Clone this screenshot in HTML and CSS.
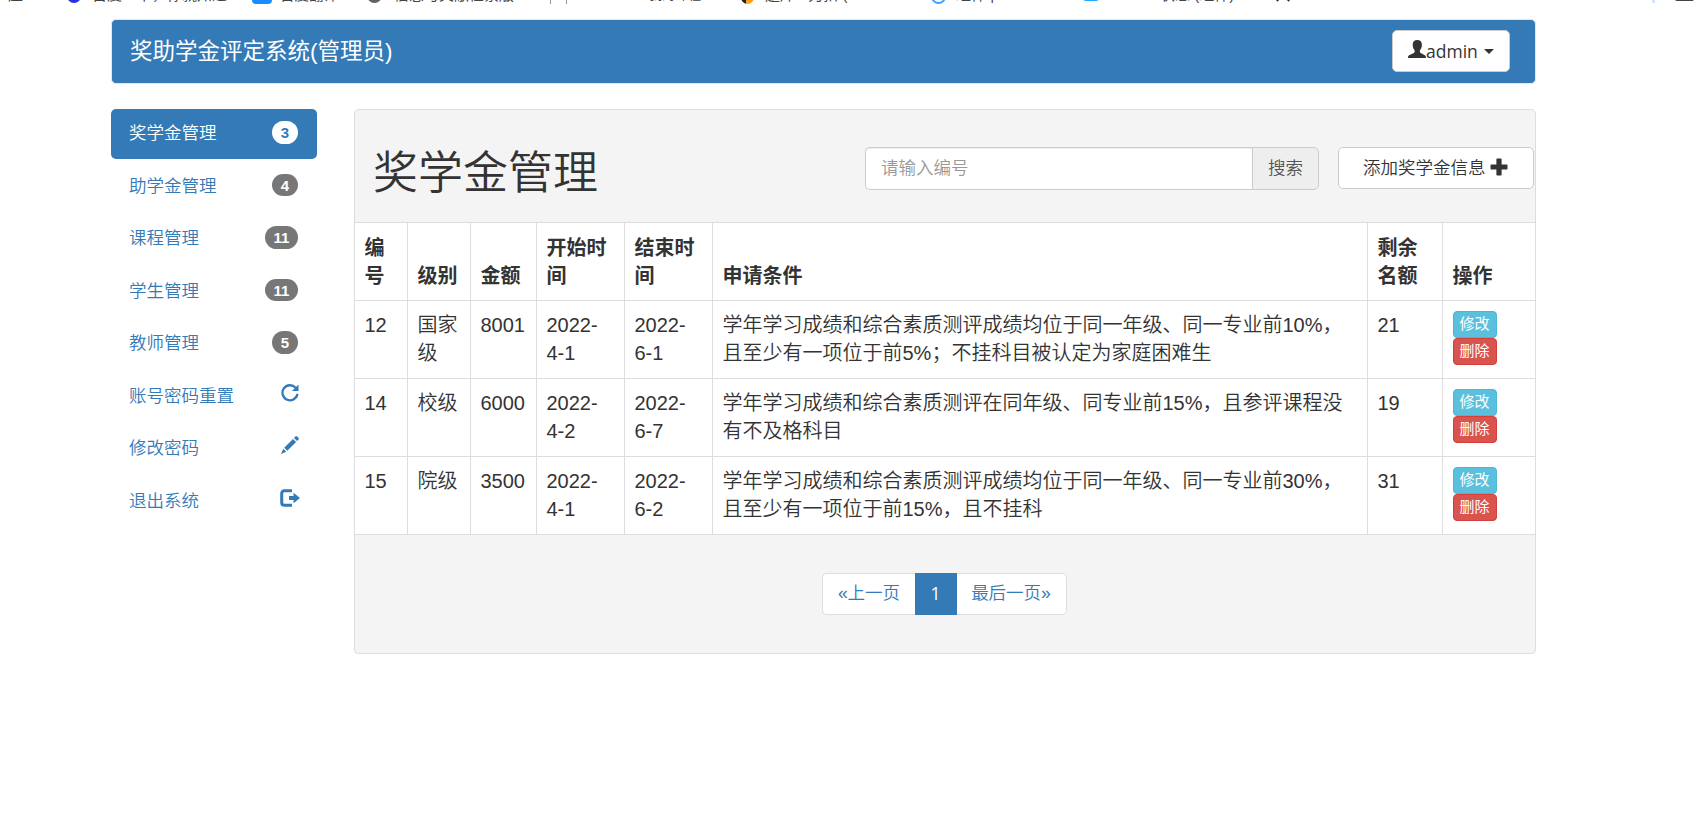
FILE: index.html
```html
<!DOCTYPE html>
<html lang="zh-CN">
<head>
    <meta charset="UTF-8">
    <meta name="viewport" content="width=device-width, initial-scale=1.0">
    <title>奖助学金评定系统</title>
    <link rel="stylesheet" href="styles.css">
</head>
<body>
    <div class="bookmarks">
        <span class="bm bm-first">应</span>
        <i class="dot dot-paw"></i><span class="bm bm-baidu">百度一下，你就知道</span>
        <i class="dot dot-blue"></i><span class="bm bm-fanyi">百度翻译</span>
        <i class="dot dot-gray"></i><span class="bm bm-info">信息与文献检索版</span>
        <i class="dot dot-line"></i><span class="bm bm-course">我的课程</span>
        <i class="dot dot-leet"></i><span class="bm bm-leet">题库 - 力扣 (</span>
        <i class="dot dot-hex"></i><span class="bm bm-comp">组件 |</span>
        <i class="dot dot-sky"></i><span class="bm bm-state">状态 (组件)</span>
        <i class="dot dot-git"></i>
        <i class="dot dot-sep"></i>
        <i class="dot dot-folder"></i>
    </div>

    <div class="container">
        <nav class="navbar">
            <a class="navbar-brand">奖助学金评定系统(管理员)</a>
            <button class="btn btn-user">
                <svg class="icon" viewBox="0 0 18 18"><path d="M9.300 0C6.300 0 4.700 1.800 4.700 4.800c0 2.600.8 4.400 1.900 5.500v1.500c0 .6-.3.900-.8 1.200L1.600 15C.4 15.600 0 16.300 0 18h18c0-1.700-.4-2.400-1.600-3l-3.700-2c-.5-.3-.8-.6-.8-1.200v-1.500c1.200-1.100 2-2.900 2-5.500C13.900 1.800 12.300 0 9.300 0z"/></svg>admin
                <span class="caret"></span>
            </button>
        </nav>

        <div class="row">
            <ul class="sidebar">
                <li class="active"><a>奖学金管理<span class="badge">3</span></a></li>
                <li><a>助学金管理<span class="badge">4</span></a></li>
                <li><a>课程管理<span class="badge">11</span></a></li>
                <li><a>学生管理<span class="badge">11</span></a></li>
                <li><a>教师管理<span class="badge">5</span></a></li>
                <li><a>账号密码重置
                    <svg class="icon" viewBox="0 0 18 18"><path d="M14.600 3.800A7.500 7.500 0 1 0 16.400 9.800" fill="none" stroke="currentColor" stroke-width="2.300"/><path d="M17.500.5V7H11z"/></svg></a></li>
                <li><a>修改密码
                    <svg class="icon" viewBox="0 0 18 18"><path d="M14.300.6c.6-.6 1.300-.6 1.900 0l1.200 1.200c.6.6.6 1.300 0 1.900l-1.300 1.300-3.100-3.100zM12 2.900 15.100 6 6.300 14.800 3.200 11.700zM2.300 12.700l3 3L0 18z"/></svg></a></li>
                <li><a>退出系统
                    <svg class="icon icon-out" viewBox="0 0 20 18"><path d="M12 1.800H4.500Q1.700 1.800 1.700 4.600v8.800q0 2.800 2.800 2.800H12" fill="none" stroke="currentColor" stroke-width="3"/><path d="M13.500 3.800 20 9 13.500 14.200v-3.300H9V7.100h4.500z"/></svg></a></li>
            </ul>

            <div class="panel">
                <div class="panel-heading">
                    <h1>奖学金管理</h1>
                    <div class="input-group">
                        <input type="text" class="form-control" placeholder="请输入编号">
                        <span class="input-addon">搜索</span>
                    </div>
                    <button class="btn btn-add">添加奖学金信息
                        <svg class="icon" viewBox="0 0 18 18"><path d="M7.200.5h3.600q.8 0 .8.800v5.100h5.100q.8 0 .8.800v3.600q0 .8-.8.800h-5.100v5.100q0 .8-.8.800H7.200q-.8 0-.8-.8v-5.100H1.300q-.8 0-.8-.8V7.200q0-.8.8-.8h5.100V1.300q0-.8.800-.8z"/></svg>
                    </button>
                </div>

                <table class="table">
                    <colgroup>
                        <col class="col-id"><col class="col-level"><col class="col-money">
                        <col class="col-date"><col class="col-date"><col class="col-cond">
                        <col class="col-left"><col class="col-op">
                    </colgroup>
                    <thead>
                        <tr>
                            <th>编号</th>
                            <th>级别</th>
                            <th>金额</th>
                            <th>开始时间</th>
                            <th>结束时间</th>
                            <th>申请条件</th>
                            <th>剩余名额</th>
                            <th>操作</th>
                        </tr>
                    </thead>
                    <tbody>
                        <tr>
                            <td>12</td>
                            <td>国家级</td>
                            <td>8001</td>
                            <td>2022-<br>4-1</td>
                            <td>2022-<br>6-1</td>
                            <td>学年学习成绩和综合素质测评成绩均位于同一年级、同一专业前10%，<br>且至少有一项位于前5%；不挂科目被认定为家庭困难生</td>
                            <td>21</td>
                            <td class="ops"><a class="btn-xs btn-info">修改</a><a class="btn-xs btn-danger">删除</a></td>
                        </tr>
                        <tr>
                            <td>14</td>
                            <td>校级</td>
                            <td>6000</td>
                            <td>2022-<br>4-2</td>
                            <td>2022-<br>6-7</td>
                            <td>学年学习成绩和综合素质测评在同年级、同专业前15%，且参评课程没<br>有不及格科目</td>
                            <td>19</td>
                            <td class="ops"><a class="btn-xs btn-info">修改</a><a class="btn-xs btn-danger">删除</a></td>
                        </tr>
                        <tr>
                            <td>15</td>
                            <td>院级</td>
                            <td>3500</td>
                            <td>2022-<br>4-1</td>
                            <td>2022-<br>6-2</td>
                            <td>学年学习成绩和综合素质测评成绩均位于同一年级、同一专业前30%，<br>且至少有一项位于前15%，且不挂科</td>
                            <td>31</td>
                            <td class="ops"><a class="btn-xs btn-info">修改</a><a class="btn-xs btn-danger">删除</a></td>
                        </tr>
                    </tbody>
                </table>

                <div class="panel-footer">
                    <ul class="pagination">
                        <li class="prev">«上一页</li>
                        <li class="active">1</li>
                        <li class="next">最后一页»</li>
                    </ul>
                </div>
            </div>
        </div>
    </div>
</body>
</html>
```
FILE: styles.css
```css
* {
    box-sizing: border-box;
}

body {
    margin: 0;
    background: #fff;
    color: #333;
    font-family: "Liberation Sans", "Noto Sans CJK SC", sans-serif;
    font-size: 17.5px;
    font-weight: 350;
    line-height: 25px;
}

ul {
    list-style: none;
    margin: 0;
    padding: 0;
}

.icon {
    width: 18px;
    height: 18px;
    fill: currentColor;
}

/* bottom edge of the bookmarks bar */
.bookmarks {
    display: flex;
    align-items: flex-end;
    height: 4px;
    overflow: hidden;
    font-size: 15px;
    line-height: 20px;
    font-weight: 400;
    color: #444;
}

.bm {
    flex: none;
    height: 20px;
    margin-bottom: -1px;
    white-space: nowrap;
}

.bm-first { width: 18px; margin-left: 8px; }
.bm-baidu { width: 136px; margin-left: 11px; }
.bm-fanyi { width: 60px; margin-left: 8px; font-size: 14.5px; }
.bm-info { width: 120px; margin-left: 12px; }
.bm-course { width: 60px; margin-left: 82px; font-size: 13px; }
.bm-leet { width: 90px; margin-left: 11px; }
.bm-comp { width: 42px; margin-left: 10px; }
.bm-state { width: 80px; margin-left: 61px; }

.dot {
    flex: none;
    height: 18px;
    width: 16px;
    border-radius: 8px;
}

.dot-paw { width: 14px; margin-left: 41px; margin-bottom: 1px; background: #2932e1; }
.dot-blue { width: 20px; margin-left: 24px; border-radius: 4px; background: #1a8cff; }
.dot-gray { width: 15px; margin-left: 27px; margin-bottom: 1px; border: 3px solid #5f6368; }
.dot-line { width: 17px; margin-left: 36px; border: solid #999; border-width: 0 1px; border-radius: 0; }
.dot-leet { width: 13px; margin-left: 32px; background: linear-gradient(90deg, #222 40%, #ffa116 40%); }
.dot-hex { width: 15px; margin-left: 76px; border: 2px solid #409eff; }
.dot-sky { width: 16px; margin-left: 85px; margin-bottom: 3px; border-radius: 3px; background: #1fa8ff; }
.dot-git { width: 16px; margin-left: 35px; border: 5px solid #24292f; border-bottom-color: #fff; }
.dot-sep { width: 3px; margin-left: 361px; margin-bottom: 1px; border-radius: 0; background: #d3e3fd; }
.dot-folder { width: 19px; margin-left: 20px; margin-bottom: 3px; border-radius: 2px; background: #444; }

.container {
    width: 1425px;
    margin: 15px 0 0 111px;
}

.navbar {
    display: flex;
    justify-content: space-between;
    align-items: flex-start;
    height: 65px;
    padding: 10px 25px 0 18px;
    border: 1px solid #e7e7e7;
    border-radius: 5px;
    background: #337ab7;
}

.navbar-brand {
    margin-top: 9px;
    color: #fff;
    font-size: 22.5px;
    font-weight: 400;
}

.btn {
    border: 1px solid #ccc;
    border-radius: 5px;
    background: #fff;
    color: #333;
    font-family: inherit;
    font-size: 17.5px;
    font-weight: inherit;
    line-height: 25px;
    white-space: nowrap;
}

.btn-user {
    display: flex;
    align-items: center;
    width: 118px;
    height: 42px;
    padding: 0 0 0 15px;
    font-family: "Open Sans", sans-serif;
    font-weight: 400;
}

.btn-user .icon {
    margin-top: -4px;
}

.caret {
    margin-left: 6px;
    border-top: 5px solid #333;
    border-left: 5px solid transparent;
    border-right: 5px solid transparent;
}

.row {
    display: flex;
    justify-content: space-between;
    margin-top: 25px;
}

.sidebar {
    display: flex;
    flex-direction: column;
    gap: 2.5px;
    width: 206px;
}

.sidebar a {
    display: flex;
    justify-content: space-between;
    align-items: flex-start;
    height: 50px;
    padding: 12px 19px 0 18px;
    border-radius: 5px;
    color: #337ab7;
}

.sidebar .active a {
    background: #337ab7;
    color: #fff;
}

.badge {
    height: 22.5px;
    min-width: 26px;
    padding: 0 8.75px;
    border-radius: 12.5px;
    background: #777;
    color: #fff;
    font-size: 15px;
    font-weight: 700;
    line-height: 23px;
    text-align: center;
}

.active .badge {
    background: #fff;
    color: #337ab7;
}

.sidebar .icon {
    margin-right: -1px;
}

.sidebar .icon-out {
    width: 20px;
    margin-right: -2px;
}

.panel {
    width: 1182px;
    height: 545px;
    border: 1px solid #ddd;
    border-radius: 5px;
    background: #f4f4f4;
    box-shadow: 0 1px 1px rgba(0, 0, 0, .05);
}

.panel-heading {
    display: flex;
    align-items: flex-start;
    height: 112px;
    padding: 37px 1px 0 18px;
}

h1 {
    width: 492px;
    margin: 2px 0 0;
    font-size: 45px;
    font-weight: 350;
    line-height: 50px;
}

.input-group {
    display: flex;
    width: 454px;
    height: 43px;
}

.form-control {
    flex: 1;
    min-width: 0;
    padding: 0 15px 1px;
    border: 1px solid #ccc;
    border-right: 0;
    border-radius: 5px 0 0 5px;
    background: #fff;
    box-shadow: inset 0 1px 1px rgba(0, 0, 0, .075);
    font: inherit;
}

.form-control::placeholder {
    color: #999;
}

.input-addon {
    width: 67px;
    padding-top: 8px;
    border: 1px solid #ccc;
    border-radius: 0 5px 5px 0;
    background: #eee;
    color: #555;
    text-align: center;
}

.btn-add {
    display: flex;
    align-items: center;
    gap: 4px;
    width: 196px;
    height: 42px;
    margin-left: 19px;
    padding: 0 0 0 24px;
}

.btn-add .icon {
    margin-top: -2px;
}

.table {
    width: 1180px;
    table-layout: fixed;
    border-collapse: separate;
    border-spacing: 0;
    border-top: 1px solid #ddd;
    background: #fff;
    font-size: 20px;
    line-height: 28px;
}

.col-id { width: 53px; }
.col-level { width: 63px; }
.col-money { width: 66px; }
.col-date { width: 88px; }
.col-cond { width: 655px; }
.col-left { width: 75px; }
.col-op { width: 92px; }

th,
td {
    height: 78px;
    padding: 10px 0 10px 9.5px;
    border-right: 1px solid #ddd;
    border-bottom: 1px solid #ddd;
    text-align: left;
    vertical-align: top;
}

th {
    padding-right: 10px;
    font-weight: 700;
    vertical-align: bottom;
}

td:nth-child(6) {
    white-space: nowrap;
}

th:last-child,
td:last-child {
    border-right: 0;
}

.ops a {
    display: block;
    width: 44px;
    height: 27px;
    border: 1px solid;
    border-radius: 4px;
    color: #fff;
    font-size: 15px;
    font-weight: 400;
    line-height: 23px;
    text-align: center;
}

.ops .btn-info {
    border-color: #46b8da;
    background: #5bc0de;
}

.ops .btn-danger {
    border-color: #d43f3a;
    background: #d9534f;
}

.panel-footer {
    display: flex;
    justify-content: center;
    padding: 38px 2px 0 0;
}

.pagination {
    display: flex;
    height: 42px;
    color: #337ab7;
}

.pagination li {
    padding-top: 7px;
    border: 1px solid #ddd;
    background: #fff;
    text-align: center;
}

.pagination .prev {
    width: 93px;
    padding-left: 1px;
    border-right: 0;
    border-radius: 5px 0 0 5px;
}

.pagination .active {
    width: 42px;
    border-color: #337ab7;
    background: #337ab7;
    color: #fff;
    font-family: "Open Sans", sans-serif;
    font-weight: 400;
}

.pagination .next {
    width: 110px;
    border-left: 0;
    border-radius: 0 5px 5px 0;
}
```
